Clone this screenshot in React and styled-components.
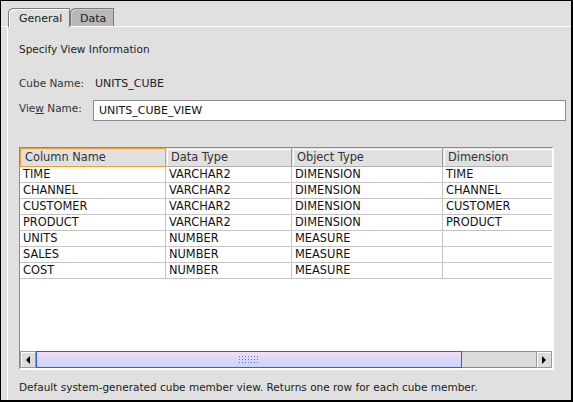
import styled, { createGlobalStyle } from "styled-components"

const GlobalStyle = createGlobalStyle`
  html, body {
    margin: 0;
    padding: 0;
    background: #e0e0e0;
  }
`

const columns = [
  { title: "Column Name", width: 146 },
  { title: "Data Type", width: 126 },
  { title: "Object Type", width: 151 },
  { title: "Dimension", width: 200 },
]

const rows = [
  ["TIME", "VARCHAR2", "DIMENSION", "TIME"],
  ["CHANNEL", "VARCHAR2", "DIMENSION", "CHANNEL"],
  ["CUSTOMER", "VARCHAR2", "DIMENSION", "CUSTOMER"],
  ["PRODUCT", "VARCHAR2", "DIMENSION", "PRODUCT"],
  ["UNITS", "NUMBER", "MEASURE", ""],
  ["SALES", "NUMBER", "MEASURE", ""],
  ["COST", "NUMBER", "MEASURE", ""],
]

const gridColumns = columns.map((c) => `${c.width}px`).join(" ")

const Frame = styled.div`
  width: 573px;
  height: 402px;
  box-sizing: border-box;
  border-style: solid;
  border-color: #000;
  border-width: 1px 2px 2px 1px;
  background: #e0e0e0;
  font-family: "DejaVu Sans", "Liberation Sans", sans-serif;
  font-size: 10.5px;
  color: #222;
  overflow: hidden;
`

const TabStrip = styled.div`
  display: flex;
  align-items: flex-end;
  height: 26px;
  box-sizing: border-box;
  padding: 7px 0 0 7px;
  border-bottom: 1px solid #fff;
`

const Tab = styled.div`
  position: relative;
  box-sizing: border-box;
  height: ${({ $active }) => ($active ? "19px" : "18px")};
  margin-bottom: ${({ $active }) => ($active ? "-1px" : "0")};
  padding: 3px 0 0 ${({ $active }) => ($active ? "10px" : "9px")};
  width: ${({ $active }) => ($active ? "62px" : "44px")};
  background: ${({ $active }) => ($active ? "#e0e0e0" : "#b8b8b8")};
  border: 1px solid #7a7a7a;
  border-bottom: none;
  border-top-left-radius: 6px 5px;
  box-shadow: ${({ $active }) => ($active ? "inset 1px 1px 0 #fff" : "inset 1px 1px 0 #d0d0d0")};
  color: #222;
  font-size: 11px;
  line-height: 13px;
  z-index: ${({ $active }) => ($active ? 1 : 0)};
`

const Panel = styled.div`
  display: flex;
  flex-direction: column;
  margin-left: 6px;
  height: 373px;
  border-left: 1px solid #fff;
  padding-left: 11px;
`

const Heading = styled.div`
  margin-top: 16px;
  line-height: 13px;
`

const FieldRow = styled.div`
  display: flex;
  align-items: flex-start;
  margin-top: ${({ $gap }) => $gap}px;
`

const Label = styled.div`
  width: 74px;
  padding-top: ${({ $pad }) => $pad || 0}px;
  line-height: 13px;
  color: #333;

  u {
    text-decoration: underline;
    text-underline-offset: 1px;
  }
`

const Value = styled.div`
  padding-left: 2px;
  line-height: 13px;
  font-size: 11px;
  color: #222;
`

const TextInput = styled.div`
  width: 473px;
  height: 21px;
  box-sizing: border-box;
  border: 1px solid #8a8a8a;
  background: #fff;
  padding-left: 5px;
  line-height: 19px;
  font-size: 11px;
  color: #111;
`

const TableBox = styled.div`
  display: flex;
  flex-direction: column;
  margin-top: 26px;
  width: 535px;
  height: 223px;
  box-sizing: border-box;
  border-style: solid;
  border-width: 1px 2px 2px 1px;
  border-color: #8a8a8a #fff #fff #8a8a8a;
  background: #fff;
`

const Viewport = styled.div`
  height: 203px;
  overflow: hidden;
  font-size: 11.4px;
`

const Row = styled.div`
  display: grid;
  grid-template-columns: ${gridColumns};
`

const HeaderCell = styled.div`
  box-sizing: border-box;
  height: 19px;
  padding-left: 4px;
  line-height: 17px;
  background: #e0e0e0;
  color: #333;
  border: 1px solid ${({ $focus }) => ($focus ? "#f0a030" : "#e0e0e0")};
  border-right-color: ${({ $focus }) => ($focus ? "#f0a030" : "#9a9a9a")};
  border-bottom-color: ${({ $focus }) => ($focus ? "#f0a030" : "#b0b0b0")};
  box-shadow: ${({ $focus }) => ($focus ? "none" : "inset 1px 1px 0 #fff")};
  white-space: nowrap;
  overflow: hidden;
`

const Cell = styled.div`
  box-sizing: border-box;
  height: 16px;
  padding-left: 3px;
  line-height: 15px;
  border-right: 1px solid #c4c4c4;
  border-bottom: 1px solid #c4c4c4;
  color: #111;
  white-space: nowrap;
  overflow: hidden;
`

const ScrollBar = styled.div`
  display: flex;
  height: 17px;
`

const ArrowButton = styled.div`
  display: flex;
  align-items: center;
  justify-content: center;
  width: 16px;
  box-sizing: border-box;
  background: #dcdcdc;
  border: 1px solid #9a9a9a;
  box-shadow: inset 1px 1px 0 #fff;
`

const Track = styled.div`
  flex: 1;
  display: flex;
  box-sizing: border-box;
  background: #dcdcdc;
  border-top: 1px solid #8a8a8a;
  border-bottom: 1px solid #8a8a8a;
`

const Thumb = styled.div`
  display: flex;
  align-items: center;
  justify-content: center;
  width: ${({ $width }) => $width}px;
  box-sizing: border-box;
  margin: -1px 0;
  border: 1px solid #3a5cc8;
  background: linear-gradient(#eee0f6 0%, #e2d6f8 45%, #c4d6fa 100%);
`

const Grip = styled.div`
  width: 22px;
  height: 9px;
  background-image: radial-gradient(circle, #5a70d8 0.8px, transparent 1px);
  background-size: 3px 3px;
`

const Footer = styled.div`
  margin-top: 11px;
  line-height: 13px;
  color: #222;
`

const Arrow = ({ dir }) => (
  <svg width="4" height="8" viewBox="0 0 4 8">
    {dir === "left" ? (
      <polygon points="4,0 4,8 0,4" fill="#000" />
    ) : (
      <polygon points="0,0 0,8 4,4" fill="#000" />
    )}
  </svg>
)

const App = () => {
  return (
    <>
      <GlobalStyle />
      <Frame>
        <TabStrip>
          <Tab $active>General</Tab>
          <Tab>Data</Tab>
        </TabStrip>
        <Panel>
          <Heading>Specify View Information</Heading>
          <FieldRow $gap={21}>
            <Label>Cube Name:</Label>
            <Value>UNITS_CUBE</Value>
          </FieldRow>
          <FieldRow $gap={10}>
            <Label $pad={2}>
              Vie<u>w</u> Name:
            </Label>
            <TextInput>UNITS_CUBE_VIEW</TextInput>
          </FieldRow>
          <TableBox>
            <Viewport>
              <Row>
                {columns.map((c, i) => (
                  <HeaderCell key={c.title} $focus={i === 0}>
                    {c.title}
                  </HeaderCell>
                ))}
              </Row>
              {rows.map((r, ri) => (
                <Row key={ri}>
                  {r.map((v, ci) => (
                    <Cell key={ci}>{v}</Cell>
                  ))}
                </Row>
              ))}
            </Viewport>
            <ScrollBar>
              <ArrowButton>
                <Arrow dir="left" />
              </ArrowButton>
              <Track>
                <Thumb $width={426}>
                  <Grip />
                </Thumb>
              </Track>
              <ArrowButton>
                <Arrow dir="right" />
              </ArrowButton>
            </ScrollBar>
          </TableBox>
          <Footer>
            Default system-generated cube member view. Returns one row for each cube member.
          </Footer>
        </Panel>
      </Frame>
    </>
  )
}

export default App
